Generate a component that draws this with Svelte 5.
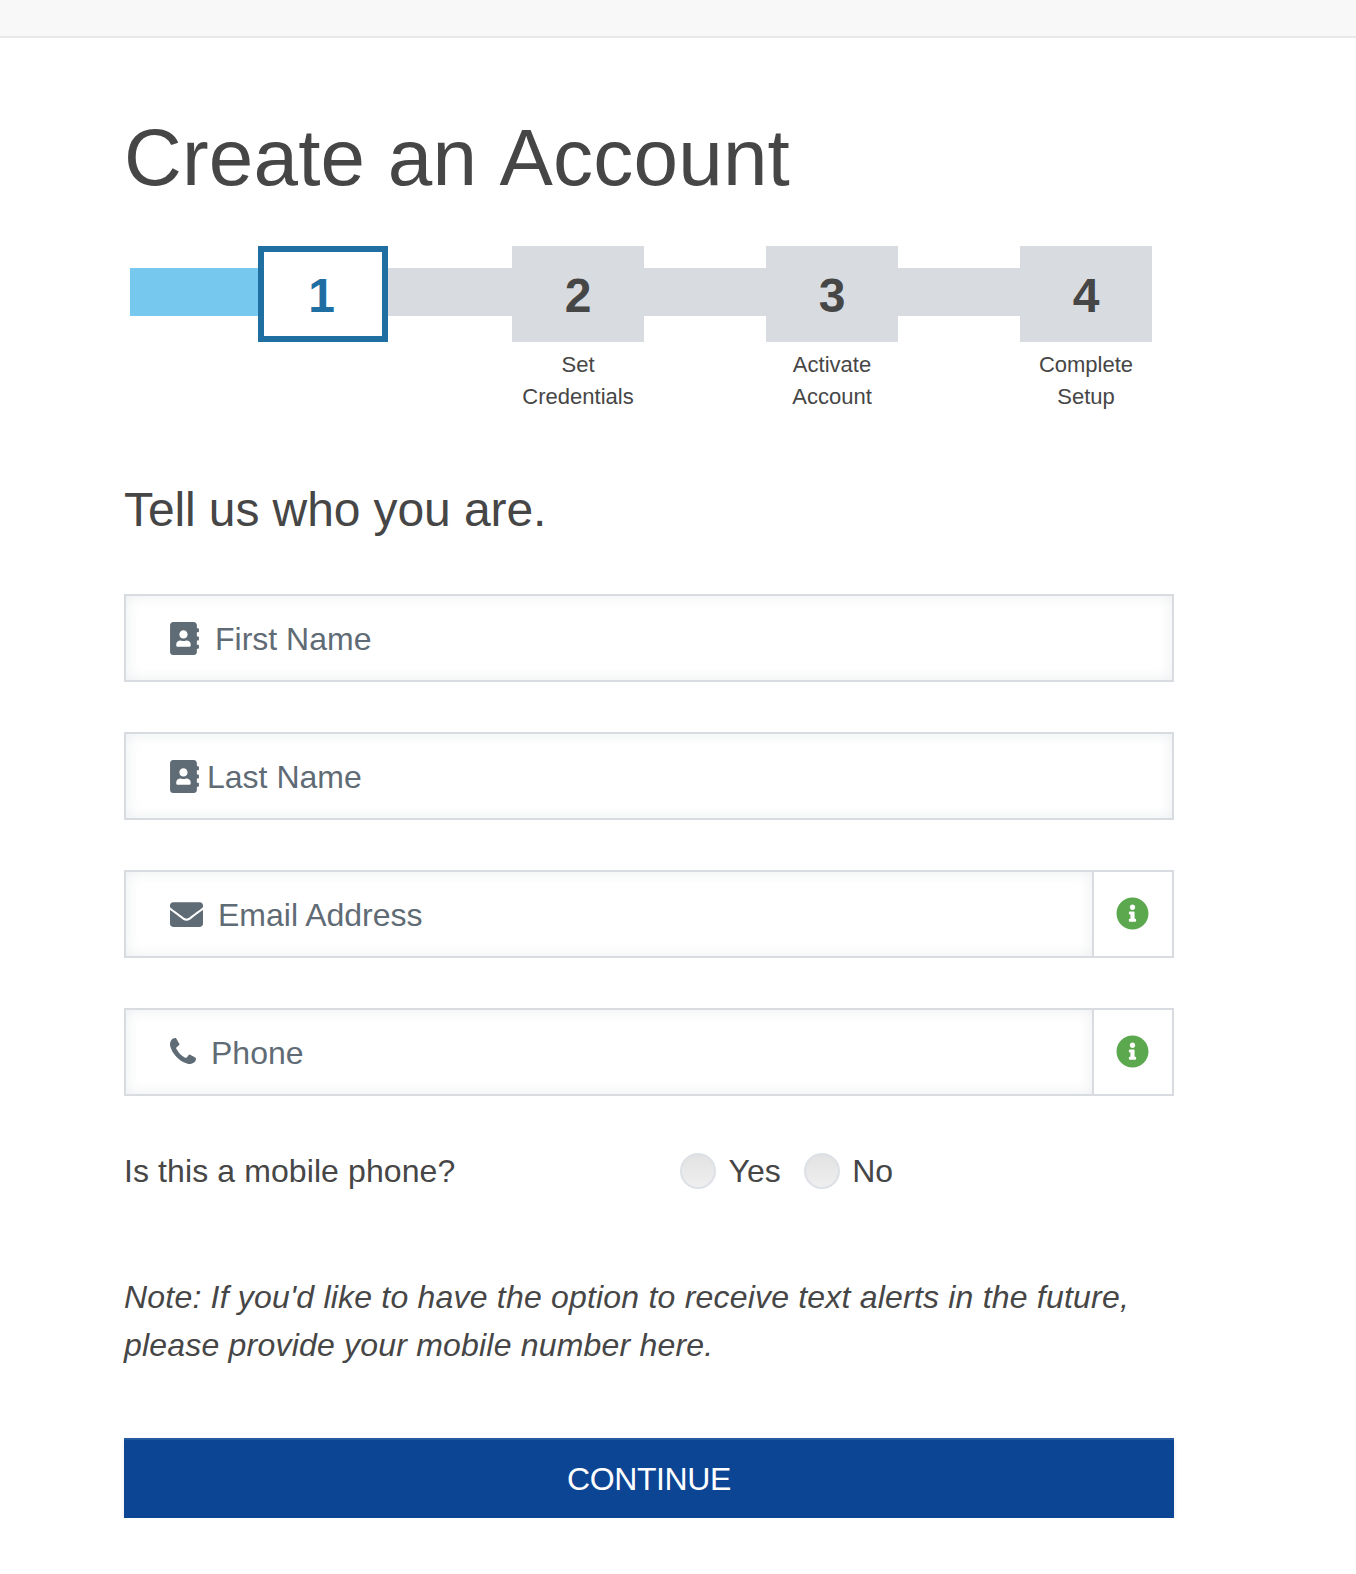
<script>
  const addressBook =
    "M436 160c6.6 0 12-5.4 12-12v-40c0-6.6-5.4-12-12-12h-20V48c0-26.5-21.5-48-48-48H48C21.5 0 0 21.5 0 48v416c0 26.5 21.5 48 48 48h320c26.5 0 48-21.5 48-48v-48h20c6.6 0 12-5.4 12-12v-40c0-6.6-5.4-12-12-12h-20v-64h20c6.6 0 12-5.4 12-12v-40c0-6.6-5.4-12-12-12h-20v-64h20zm-228-32c35.3 0 64 28.7 64 64s-28.7 64-64 64-64-28.7-64-64 28.7-64 64-64zm112 236.8c0 10.6-10 19.2-22.4 19.2H118.4C106 384 96 375.4 96 364.8v-19.2c0-31.8 30.1-57.6 67.2-57.6h5c12.3 5.1 25.7 8 39.8 8s27.6-2.9 39.8-8h5c37.1 0 67.2 25.8 67.2 57.6v19.2z";
  const envelope =
    "M502.3 190.8c3.9-3.1 9.7-.2 9.7 4.7V400c0 26.5-21.5 48-48 48H48c-26.5 0-48-21.5-48-48V195.6c0-5 5.7-7.8 9.7-4.7 22.4 17.4 52.1 39.5 154.1 113.6 21.1 15.4 56.7 47.8 92.2 47.6 35.7.3 72-32.8 92.3-47.6 102-74.1 131.6-96.3 154-113.7zM256 320c23.2.4 56.6-29.2 73.4-41.4 132.7-96.3 142.8-104.7 173.4-128.7 5.8-4.5 9.2-11.5 9.2-18.9v-19c0-26.5-21.5-48-48-48H48C21.5 64 0 85.5 0 112v19c0 7.4 3.4 14.3 9.2 18.9 30.6 23.9 40.7 32.4 173.4 128.7 16.8 12.2 50.2 41.8 73.4 41.4z";
  const phone =
    "M1600 1240q0 27-10 70.5t-21 68.5q-21 50-122 106-94 51-186 51-27 0-53-3.5t-57.5-12.5-47-14.5-55.5-20.5-49-18q-98-35-175-83-127-79-264-216t-216-264q-48-77-83-175-3-9-18-49t-20.5-55.5-14.5-47-12.5-57.5-3.5-53q0-92 51-186 56-101 106-122 25-11 68.5-21t70.5-10q14 0 21 3 18 6 53 76 11 19 30 54t35 63.5 31 53.5q3 4 17.5 25t21.5 35.5 7 28.5q0 20-28.5 50t-62 55-62 53-28.5 46q0 9 5 22.5t8.5 20.5 14 24 11.5 19q76 137 174 235t235 174q2 1 19 11.5t24 14 20.5 8.5 22.5 5q18 0 46-28.5t53-62 55-62 50-28.5q14 0 28.5 7t35.5 21.5 25 17.5q25 15 53.5 31t63.5 35 54 30q70 35 76 53 3 7 3 21z";
  const info =
    "M256 8C119 8 8 119.1 8 256c0 137 111 248 248 248s248-111 248-248C504 119.1 393 8 256 8zm0 110c23.2 0 42 18.8 42 42s-18.8 42-42 42-42-18.8-42-42 18.8-42 42-42zm56 254c0 6.6-5.4 12-12 12h-88c-6.6 0-12-5.4-12-12v-24c0-6.6 5.4-12 12-12h12v-64h-12c-6.6 0-12-5.4-12-12v-24c0-6.6 5.4-12 12-12h64c6.6 0 12 5.4 12 12v100h12c6.6 0 12 5.4 12 12v24z";

  const steps = [
    { n: 2, label: ["Set", "Credentials"] },
    { n: 3, label: ["Activate", "Account"] },
    { n: 4, label: ["Complete", "Setup"] },
  ];

  const fields = [
    { name: "first", placeholder: "First Name", icon: addressBook, vb: "0 0 448 512", cls: "book" },
    { name: "last", placeholder: "Last Name", icon: addressBook, vb: "0 0 448 512", cls: "book tight" },
    { name: "email", placeholder: "Email Address", icon: envelope, vb: "0 0 512 512", cls: "mail", help: true },
    { name: "phone", placeholder: "Phone", icon: phone, vb: "192 128 1408 1408", cls: "tel", help: true },
  ];
</script>

<div class="topbar"></div>

<main>
  <h1>Create an Account</h1>

  <div class="steps">
    <div class="link first"></div>
    <div class="step current"><div class="box">1</div></div>
    {#each steps as s}
      <div class="link"></div>
      <div class="step">
        <div class="box">{s.n}</div>
        <div class="label">{s.label[0]}<br />{s.label[1]}</div>
      </div>
    {/each}
  </div>

  <h2>Tell us who you are.</h2>

  <form>
    {#each fields as f}
      <div class="field">
        <div class="control {f.cls}">
          <svg viewBox={f.vb} aria-hidden="true"><path d={f.icon} /></svg>
          <input type="text" name={f.name} placeholder={f.placeholder} />
        </div>
        {#if f.help}
          <div class="addon">
            <svg viewBox="0 0 512 512" aria-hidden="true"><path d={info} /></svg>
          </div>
        {/if}
      </div>
    {/each}

    <div class="mobile">
      <span class="question">Is this a mobile phone?</span>
      <label><input type="radio" name="mobile" />Yes</label>
      <label><input type="radio" name="mobile" />No</label>
    </div>

    <p class="note">
      Note: If you'd like to have the option to receive text alerts in the future,<br />
      please provide your mobile number here.
    </p>

    <button type="button">CONTINUE</button>
  </form>
</main>

<style>
  :global(body) {
    background: #fff;
    color: #464646;
    font-family: "Liberation Sans", Arial, sans-serif;
  }

  .topbar {
    height: 36px;
    background: #f8f8f9;
    border-bottom: 2px solid #e8e9eb;
  }

  main {
    width: 1050px;
    margin-left: 124px;
  }

  h1 {
    margin: 72px 0 0;
    font-size: 80px;
    font-weight: 400;
    line-height: 96px;
    font-kerning: none;
    letter-spacing: 0.2px;
  }

  .steps {
    display: flex;
    margin: 40px 0 0 6px;
  }

  .link {
    width: 122px;
    height: 48px;
    margin-top: 22px;
    background: #d8dbdf;
  }

  .link.first {
    width: 128px;
    background: #76c8ee;
  }

  .link.first + .step + .link {
    width: 124px;
  }

  .step {
    width: 132px;
    text-align: center;
  }

  .step.current {
    width: 130px;
  }

  .box {
    height: 96px;
    background: #d8dbdf;
    font-size: 48px;
    font-weight: 700;
    line-height: 99px;
  }

  .current .box {
    box-sizing: border-box;
    padding-right: 3px;
    background: #fff;
    border: 6px solid #206fa3;
    color: #206fa3;
    line-height: 87px;
  }

  .label {
    margin-top: 7px;
    font-size: 22px;
    line-height: 32px;
  }

  h2 {
    margin: 69px 0 0;
    font-size: 48px;
    font-weight: 400;
    line-height: 56px;
    letter-spacing: -0.1px;
  }

  form {
    margin-top: 56px;
  }

  .field {
    display: flex;
    height: 88px;
    margin-bottom: 50px;
    box-sizing: border-box;
    border: 2px solid #d8dbe0;
  }

  .control {
    flex: 1;
    display: flex;
    align-items: center;
    gap: 16px;
    padding-left: 44px;
    box-shadow: inset 0 0 14px rgba(216, 219, 224, 0.5);
  }

  .control.tight {
    gap: 8px;
  }

  .control svg {
    flex: none;
    fill: #5f6b75;
  }

  .book svg {
    width: 29px;
    height: 33px;
  }

  .mail {
    gap: 15px;
  }

  .mail svg {
    width: 33px;
    height: 33px;
  }

  .tel {
    gap: 15px;
  }

  .tel svg {
    width: 26px;
    height: 26px;
    margin-bottom: 2px;
  }

  .control input {
    flex: 1;
    min-width: 0;
    padding: 2px 0 0;
    border: 0;
    outline: 0;
    background: transparent;
    font: 32px "Liberation Sans", Arial, sans-serif;
    color: #5f6b75;
  }

  .control input::placeholder {
    color: #5f6b75;
    opacity: 1;
  }

  .addon {
    width: 78px;
    display: flex;
    align-items: center;
    justify-content: center;
    border-left: 2px solid #d8dbe0;
  }

  .addon svg {
    width: 33px;
    height: 33px;
    margin: 0 2px 1px 0;
    fill: #5ba84f;
  }

  .mobile {
    display: flex;
    align-items: center;
    height: 40px;
    margin-top: 55px;
    font-size: 32px;
  }

  .question {
    width: 556px;
    letter-spacing: 0.1px;
  }

  .mobile label {
    display: flex;
    align-items: center;
    gap: 12.5px;
    margin-right: 23px;
  }

  .mobile input {
    appearance: none;
    width: 36px;
    height: 36px;
    margin: 0;
    border: 2px solid #dde1e6;
    border-radius: 50%;
    background: linear-gradient(#e2e2e2, #efefef);
  }

  .note {
    margin: 82px 0 0;
    font-size: 32px;
    font-style: italic;
    line-height: 48px;
    letter-spacing: 0.2px;
  }

  button {
    display: block;
    width: 100%;
    height: 80px;
    margin-top: 69px;
    padding: 0;
    border: 0;
    border-top: 2px solid #2559a2;
    background: #0d4595;
    box-shadow: 0 2px 4px rgba(0, 0, 0, 0.1);
    color: #fff;
    font: 32px "Liberation Sans", Arial, sans-serif;
    letter-spacing: -0.4px;
  }
</style>
